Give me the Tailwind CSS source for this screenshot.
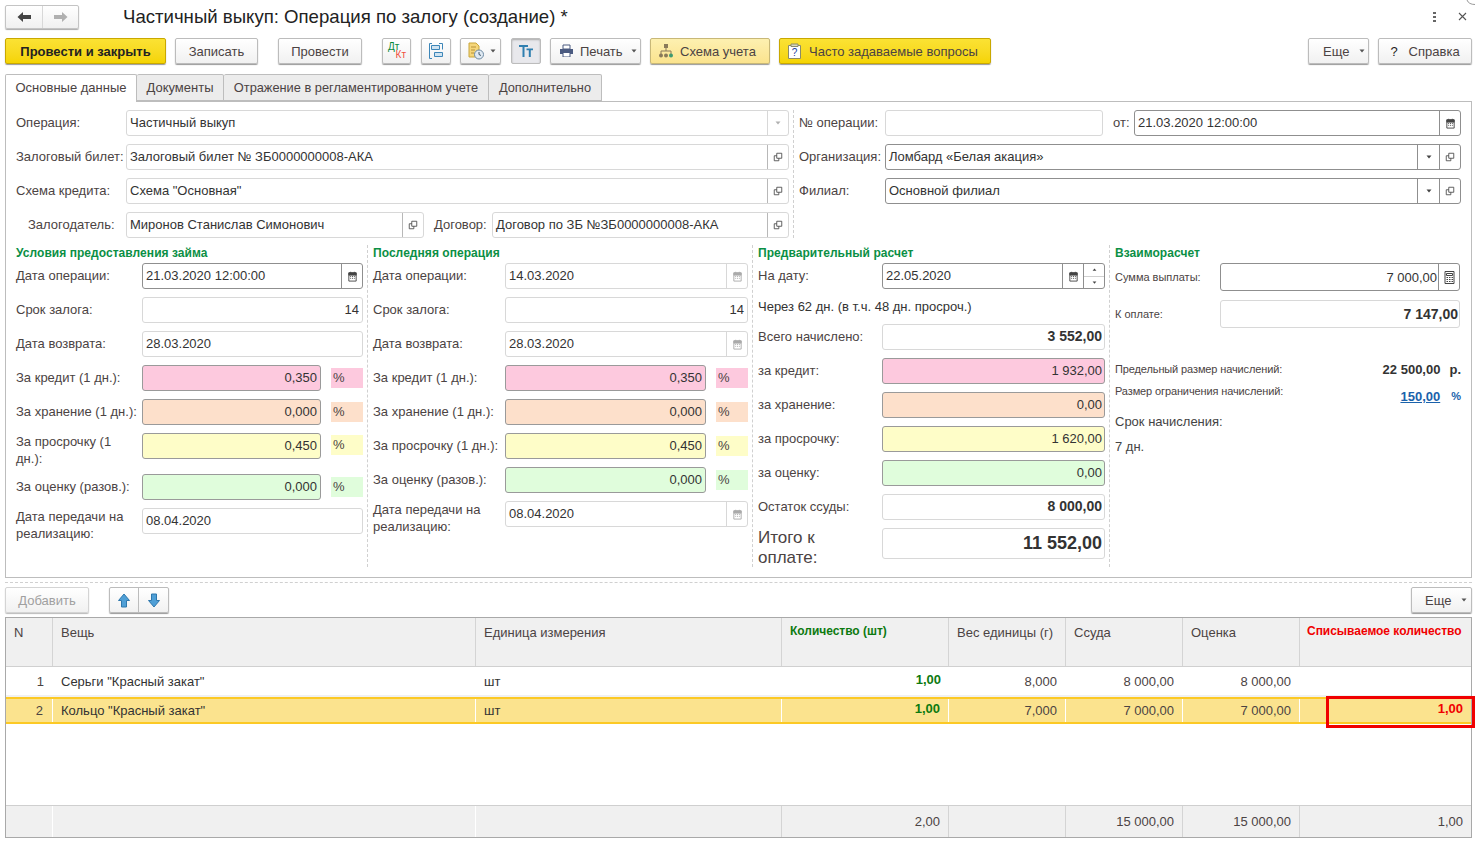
<!DOCTYPE html>
<html lang="ru">
<head>
<meta charset="UTF-8">
<title>Частичный выкуп: Операция по залогу (создание)</title>
<script src="https://cdn.jsdelivr.net/npm/@tailwindcss/browser@4"></script>
</head>
<body class="relative bg-white w-[1475px] h-[844px] overflow-hidden font-['Liberation_Sans',Arial,sans-serif] text-[13px] leading-[17px] text-[#4b4343]">
<svg class="hidden">
  <symbol id="cal" viewBox="0 0 12 12"><path d="M2 2h8v9H2z" fill="none" stroke="currentColor"/><path d="M2 2h8v2.500H2zM4 .8v2M8 .8v2" fill="currentColor" stroke="currentColor" stroke-width=".8"/><path d="M3.500 6h1M5.500 6h1M7.500 6h1M3.500 8h1M5.500 8h1M7.500 8h1" stroke="currentColor"/></symbol>
  <symbol id="copy" viewBox="0 0 12 12"><path d="M4.500 1.500h6v6h-6z" fill="none" stroke="#444"/><path d="M4.500 4.500h-3v6h5.500v-3" fill="none" stroke="#444"/></symbol>
  <symbol id="tri" viewBox="0 0 6 4"><path d="M.5.5h5L3 3.500z" fill="currentColor"/></symbol>
</svg>
<svg class="absolute top-0 right-0" width="9" height="5" viewBox="0 0 9 5"><path d="M1 0c1 3 4 4.500 8 4.500" fill="none" stroke="#999"/></svg>

<div class="pl-[5px] pr-[3px] pt-[5px]">
  <!-- заголовок -->
  <div class="flex items-center h-[33px] pb-[10px]">
    <div class="flex w-[74px] h-[24px] border border-[#c4c4c4] rounded-[2px] shadow-[0_1px_1px_#aaa] bg-linear-to-b from-white to-[#f0f0f0]">
      <div class="w-[37px] flex items-center justify-center border-r border-[#d8d8d8]">
        <svg width="16" height="12" viewBox="0 0 16 12"><path d="M7 1 1.500 6 7 11V8h8V4H7z" fill="#444"/></svg>
      </div>
      <div class="flex-1 flex items-center justify-center">
        <svg width="16" height="12" viewBox="0 0 16 12"><path d="M9 1l5.500 5L9 11V8H1V4h8z" fill="#b0b0b0"/></svg>
      </div>
    </div>
    <div class="ml-[44px] text-[18.6px] leading-[24px] text-[#222]">Частичный выкуп: Операция по залогу (создание) *</div>
    <div class="ml-auto flex items-center text-[#555]">
      <div class="flex flex-col gap-[2px] mr-[22px]"><span class="w-[3px] h-[2px] bg-[#666]"></span><span class="w-[3px] h-[2px] bg-[#666]"></span><span class="w-[3px] h-[2px] bg-[#666]"></span></div>
      <svg class="mr-[5px]" width="9" height="9" viewBox="0 0 9 9"><path d="M1 1l7 7M8 1 1 8" stroke="#555" stroke-width="1.100"/></svg>
    </div>
  </div>

  <!-- панель команд -->
  <div class="flex items-center h-[26px]">
    <button class="w-[161px] h-[26px] rounded-[2px] border border-[#c9a800] bg-linear-to-b from-[#fbe233] to-[#f5d400] shadow-[0_1px_1px_#999] font-bold text-[#222]">Провести и закрыть</button>
    <button class="ml-[9px] w-[83px] h-[26px] rounded-[2px] border border-[#bcbcbc] bg-linear-to-b from-white to-[#f1f1f1] shadow-[0_1px_1px_#999]">Записать</button>
    <button class="ml-[20px] w-[84px] h-[26px] rounded-[2px] border border-[#bcbcbc] bg-linear-to-b from-white to-[#f1f1f1] shadow-[0_1px_1px_#999]">Провести</button>
    <button class="ml-[20px] w-[29px] h-[26px] rounded-[2px] border border-[#bcbcbc] bg-linear-to-b from-white to-[#f1f1f1] shadow-[0_1px_1px_#999] text-[10px] leading-[8px]">
      <span class="block text-left pl-[5px] text-[#0a8a3c]">Дт</span><span class="block text-right pr-[4px] text-[#f05040]">Кт</span>
    </button>
    <button class="ml-[10px] w-[30px] h-[26px] rounded-[2px] border border-[#bcbcbc] bg-linear-to-b from-white to-[#f1f1f1] shadow-[0_1px_1px_#999] flex items-center justify-center">
      <svg width="16" height="18" viewBox="0 0 16 18" fill="none" stroke="#3d86b8"><path d="M4 1.500H1.500v15H4M11 1.500h3.500v6"/><path d="M3.500 3.500h8v4h-8zM6.500 10.500h8v4h-8z" fill="#cfe3f1"/></svg>
    </button>
    <button class="ml-[9px] w-[41px] h-[26px] rounded-[2px] border border-[#bcbcbc] bg-linear-to-b from-white to-[#f1f1f1] shadow-[0_1px_1px_#999] flex items-center pl-[6px]">
      <svg width="18" height="18" viewBox="0 0 18 18"><path d="M2 1h7l3 3v11H2z" fill="#f5d67a" stroke="#c9a63c"/><path d="M4 5h5M4 8h4M4 11h3" stroke="#b8923a"/><circle cx="12" cy="12.500" r="4.500" fill="#dfe9f2" stroke="#6d8aa3"/><path d="M12 10v2.500l2 1" stroke="#44596b" fill="none"/></svg>
      <svg class="ml-[5px] text-[#555]" width="6" height="4"><use href="#tri"/></svg>
    </button>
    <button class="ml-[10px] w-[30px] h-[26px] rounded-[2px] border border-[#bcbcbc] bg-[#e8e8ec] shadow-[inset_0_1px_2px_#aaa] flex items-center justify-center">
      <svg width="16" height="14" viewBox="0 0 16 14" fill="#2f7fb0"><path d="M1 1h9v2H6.500v10h-2V3H1z"/><path d="M8.500 4.500H15v1.800h-2.200V13h-2V6.300H8.500z"/></svg>
    </button>
    <button class="ml-[9px] w-[91px] h-[26px] rounded-[2px] border border-[#bcbcbc] bg-linear-to-b from-white to-[#f1f1f1] shadow-[0_1px_1px_#999] flex items-center pl-[8px]">
      <svg width="15" height="14" viewBox="0 0 15 14"><path d="M4 1h7v4H4z" fill="#fff" stroke="#4a5a80"/><path d="M1 5h13v5h-2.500v3h-8v-3H1z" fill="#4a5a80"/><path d="M4.500 9h6v3.500h-6z" fill="#fff"/></svg>
      <span class="ml-[6px]">Печать</span>
      <svg class="ml-[8px] text-[#555]" width="6" height="4"><use href="#tri"/></svg>
    </button>
    <button class="ml-[9px] w-[120px] h-[26px] rounded-[2px] border border-[#c8b878] bg-linear-to-b from-[#fdf0b0] to-[#fbe38e] shadow-[0_1px_1px_#999] flex items-center pl-[7px]">
      <svg width="17" height="16" viewBox="0 0 17 16" fill="#8a7a5a"><path d="M6 1h4v4H6z"/><path d="M8 5v3M3 11V8h10v3" stroke="#8a7a5a" fill="none"/><circle cx="3" cy="12.500" r="2"/><circle cx="8" cy="12.500" r="2"/><circle cx="13" cy="12.500" r="2" fill="#3f9a70"/></svg>
      <span class="ml-[5px]">Схема учета</span>
    </button>
    <button class="ml-[9px] w-[212px] h-[26px] rounded-[2px] border border-[#c9a800] bg-linear-to-b from-[#fbe233] to-[#f5d400] shadow-[0_1px_1px_#999] flex items-center pl-[7px]">
      <svg width="15" height="17" viewBox="0 0 15 17"><path d="M1.500 2.500h12v13h-12z" fill="#fff" stroke="#8b8b6a"/><path d="M4 1h7v2.500H4z" fill="#d8d8c0" stroke="#8b8b6a"/><text x="7.500" y="13" text-anchor="middle" font-size="10" fill="#2040a0" font-family="Liberation Sans">?</text></svg>
      <span class="ml-[7px] whitespace-nowrap">Часто задаваемые вопросы</span>
    </button>
    <button class="ml-auto w-[61px] h-[26px] rounded-[2px] border border-[#bcbcbc] bg-linear-to-b from-white to-[#f1f1f1] shadow-[0_1px_1px_#999] flex items-center pl-[14px]">
      Еще<svg class="ml-[10px] text-[#555]" width="6" height="4"><use href="#tri"/></svg>
    </button>
    <button class="ml-[9px] w-[94px] h-[26px] rounded-[2px] border border-[#bcbcbc] bg-linear-to-b from-white to-[#f1f1f1] shadow-[0_1px_1px_#999]"><span class="mr-[11px] text-[#222]">?</span>Справка</button>
  </div>

  <!-- вкладки -->
  <div class="flex mt-[10px] h-[27px] relative z-10">
    <div class="w-[132px] h-[28px] pb-[2px] border border-[#bdbdbd] border-b-0 rounded-t-[2px] bg-white flex items-center justify-center">Основные данные</div>
    <div class="w-[87px] pb-[1px] border border-l-0 border-[#bdbdbd] rounded-t-[2px] bg-[#ececec] flex items-center justify-center">Документы</div>
    <div class="w-[265px] pb-[1px] border border-l-0 border-[#bdbdbd] rounded-t-[2px] bg-[#ececec] flex items-center justify-center text-[12.8px]">Отражение в регламентированном учете</div>
    <div class="w-[113px] pb-[1px] border border-l-0 border-[#bdbdbd] rounded-t-[2px] bg-[#ececec] flex items-center justify-center text-[12.8px]">Дополнительно</div>
  </div>

  <!-- основная панель -->
  <div class="w-[1467px] h-[477px] border border-[#bdbdbd] pt-[8px]">
    <div class="flex h-[128px]">
      <div class="w-[788px] border-r border-dashed border-[#d0d0d0] pl-[10px] pr-[3px] flex flex-col gap-[8px]">
        <div class="flex items-center h-[26px]">
          <span class="w-[110px] pb-[2px]">Операция:</span>
          <div class="w-[663px] h-[26px] border border-[#d8d8d8] rounded-[3px] flex items-center pl-[3px] text-[#333]">
            <span class="flex-1 pb-[2px]">Частичный выкуп</span>
            <span class="w-[21px] h-full border-l border-[#d8d8d8] flex items-center justify-center text-[#b0b0b0]"><svg width="6" height="4"><use href="#tri"/></svg></span>
          </div>
        </div>
        <div class="flex items-center h-[26px]">
          <span class="w-[110px] pb-[2px]">Залоговый билет:</span>
          <div class="w-[663px] h-[26px] border border-[#d8d8d8] rounded-[3px] flex items-center pl-[3px] text-[#333]">
            <span class="flex-1 pb-[2px]">Залоговый билет № ЗБ0000000008-АКА</span>
            <span class="w-[21px] h-full border-l border-[#b8b8b8] flex items-center justify-center"><svg width="10" height="10"><use href="#copy"/></svg></span>
          </div>
        </div>
        <div class="flex items-center h-[26px]">
          <span class="w-[110px] pb-[2px]">Схема кредита:</span>
          <div class="w-[663px] h-[26px] border border-[#d8d8d8] rounded-[3px] flex items-center pl-[3px] text-[#333]">
            <span class="flex-1 pb-[2px]">Схема "Основная"</span>
            <span class="w-[21px] h-full border-l border-[#b8b8b8] flex items-center justify-center"><svg width="10" height="10"><use href="#copy"/></svg></span>
          </div>
        </div>
        <div class="flex items-center h-[26px] pl-[12px]">
          <span class="w-[98px] pb-[2px]">Залогодатель:</span>
          <div class="w-[298px] h-[26px] border border-[#d8d8d8] rounded-[3px] flex items-center pl-[3px] text-[#333]">
            <span class="flex-1 pb-[2px]">Миронов Станислав Симонович</span>
            <span class="w-[21px] h-full border-l border-[#b8b8b8] flex items-center justify-center"><svg width="10" height="10"><use href="#copy"/></svg></span>
          </div>
          <span class="ml-[10px] w-[58px] pb-[2px]">Договор:</span>
          <div class="w-[297px] h-[26px] border border-[#d8d8d8] rounded-[3px] flex items-center pl-[3px] text-[#333]">
            <span class="flex-1 pb-[2px] whitespace-nowrap">Договор по ЗБ №ЗБ0000000008-АКА</span>
            <span class="w-[21px] h-full border-l border-[#b8b8b8] flex items-center justify-center"><svg width="10" height="10"><use href="#copy"/></svg></span>
          </div>
        </div>
      </div>
      <div class="flex-1 pl-[5px] flex flex-col gap-[8px]">
        <div class="flex items-center h-[26px]">
          <span class="w-[86px] pb-[2px]">№ операции:</span>
          <div class="w-[218px] h-[26px] border border-[#d8d8d8] rounded-[3px]"></div>
          <span class="ml-[10px] w-[21px] pb-[2px]">от:</span>
          <div class="w-[327px] h-[26px] border border-[#8f8f8f] rounded-[3px] flex items-center pl-[3px] text-[#333]">
            <span class="flex-1 pb-[2px]">21.03.2020 12:00:00</span>
            <span class="w-[21px] h-full border-l border-[#8f8f8f] flex items-center justify-center text-[#444]"><svg width="11" height="11"><use href="#cal"/></svg></span>
          </div>
        </div>
        <div class="flex items-center h-[26px]">
          <span class="w-[86px] pb-[2px]">Организация:</span>
          <div class="w-[576px] h-[26px] border border-[#8f8f8f] rounded-[3px] flex items-center pl-[3px] text-[#333]">
            <span class="flex-1 pb-[2px]">Ломбард «Белая акация»</span>
            <span class="w-[22px] h-full border-l border-[#8f8f8f] flex items-center justify-center text-[#444]"><svg width="6" height="4"><use href="#tri"/></svg></span>
            <span class="w-[21px] h-full border-l border-[#8f8f8f] flex items-center justify-center"><svg width="10" height="10"><use href="#copy"/></svg></span>
          </div>
        </div>
        <div class="flex items-center h-[26px]">
          <span class="w-[86px] pb-[2px]">Филиал:</span>
          <div class="w-[576px] h-[26px] border border-[#8f8f8f] rounded-[3px] flex items-center pl-[3px] text-[#333]">
            <span class="flex-1 pb-[2px]">Основной филиал</span>
            <span class="w-[22px] h-full border-l border-[#8f8f8f] flex items-center justify-center text-[#444]"><svg width="6" height="4"><use href="#tri"/></svg></span>
            <span class="w-[21px] h-full border-l border-[#8f8f8f] flex items-center justify-center"><svg width="10" height="10"><use href="#copy"/></svg></span>
          </div>
        </div>
      </div>
    </div>

    <div class="flex mt-[7px] h-[322px]">
      <!-- условия займа -->
      <div class="w-[362px] border-r border-dashed border-[#d0d0d0] pl-[10px]">
        <div class="h-[18px] font-bold text-[12px] tracking-[0.05px] text-[#0b8f45]">Условия предоставления займа</div>
        <div class="flex flex-col gap-[8px]">
          <div class="flex items-center h-[26px]"><span class="w-[126px] pb-[2px]">Дата операции:</span>
            <div class="w-[221px] h-[26px] border border-[#8f8f8f] rounded-[3px] flex items-center pl-[3px] text-[#333]"><span class="flex-1 pb-[2px]">21.03.2020 12:00:00</span><span class="w-[21px] h-full border-l border-[#8f8f8f] flex items-center justify-center text-[#444]"><svg width="11" height="11"><use href="#cal"/></svg></span></div>
          </div>
          <div class="flex items-center h-[26px]"><span class="w-[126px] pb-[2px]">Срок залога:</span>
            <div class="w-[221px] h-[26px] pb-[2px] border border-[#d8d8d8] rounded-[3px] flex items-center justify-end pr-[3px] text-[#333]">14</div>
          </div>
          <div class="flex items-center h-[26px]"><span class="w-[126px] pb-[2px]">Дата возврата:</span>
            <div class="w-[221px] h-[26px] pb-[2px] border border-[#d8d8d8] rounded-[3px] flex items-center pl-[3px] text-[#333]">28.03.2020</div>
          </div>
          <div class="flex items-center h-[26px]"><span class="w-[126px] pb-[2px]">За кредит (1 дн.):</span>
            <div class="w-[179px] h-[26px] pb-[2px] border border-[#9a9a9a] rounded-[3px] bg-[#fdc9de] flex items-center justify-end pr-[3px] text-[#333]">0,350</div>
            <div class="ml-[10px] w-[32px] h-[20px] pb-[2px] bg-[#fdc9de] pl-[2px] flex items-center">%</div>
          </div>
          <div class="flex items-center h-[26px]"><span class="w-[126px] pb-[2px] whitespace-nowrap">За хранение (1 дн.):</span>
            <div class="w-[179px] h-[26px] pb-[2px] border border-[#9a9a9a] rounded-[3px] bg-[#fde0cb] flex items-center justify-end pr-[3px] text-[#333]">0,000</div>
            <div class="ml-[10px] w-[32px] h-[20px] pb-[2px] bg-[#fde0cb] pl-[2px] flex items-center">%</div>
          </div>
          <div class="flex items-start h-[33px]"><span class="w-[126px] pr-[10px]">За просрочку (1 дн.):</span>
            <div class="w-[179px] h-[26px] pb-[2px] border border-[#9a9a9a] rounded-[3px] bg-[#fefdc8] flex items-center justify-end pr-[3px] text-[#333]">0,450</div>
            <div class="ml-[10px] mt-[2px] w-[32px] h-[20px] pb-[2px] bg-[#fefdc8] pl-[2px] flex items-center">%</div>
          </div>
          <div class="flex items-center h-[26px]"><span class="w-[126px] pb-[2px]">За оценку (разов.):</span>
            <div class="w-[179px] h-[26px] pb-[2px] border border-[#9a9a9a] rounded-[3px] bg-[#e0fddc] flex items-center justify-end pr-[3px] text-[#333]">0,000</div>
            <div class="ml-[10px] w-[32px] h-[20px] pb-[2px] bg-[#e0fddc] pl-[2px] flex items-center">%</div>
          </div>
          <div class="flex items-center h-[26px]"><span class="w-[126px] pr-[10px] pt-[8px]">Дата передачи на реализацию:</span>
            <div class="w-[221px] h-[26px] pb-[2px] border border-[#d8d8d8] rounded-[3px] flex items-center pl-[3px] text-[#333]">08.04.2020</div>
          </div>
        </div>
      </div>

      <!-- последняя операция -->
      <div class="w-[385px] border-r border-dashed border-[#d0d0d0] pl-[5px]">
        <div class="h-[18px] font-bold text-[12px] tracking-[0.05px] text-[#0b8f45]">Последняя операция</div>
        <div class="flex flex-col gap-[8px]">
          <div class="flex items-center h-[26px]"><span class="w-[132px] pb-[2px]">Дата операции:</span>
            <div class="w-[243px] h-[26px] border border-[#d8d8d8] rounded-[3px] flex items-center pl-[3px] text-[#333]"><span class="flex-1 pb-[2px]">14.03.2020</span><span class="w-[21px] h-full border-l border-[#d8d8d8] flex items-center justify-center text-[#aaa]"><svg width="11" height="11"><use href="#cal"/></svg></span></div>
          </div>
          <div class="flex items-center h-[26px]"><span class="w-[132px] pb-[2px]">Срок залога:</span>
            <div class="w-[243px] h-[26px] pb-[2px] border border-[#d8d8d8] rounded-[3px] flex items-center justify-end pr-[3px] text-[#333]">14</div>
          </div>
          <div class="flex items-center h-[26px]"><span class="w-[132px] pb-[2px]">Дата возврата:</span>
            <div class="w-[243px] h-[26px] border border-[#d8d8d8] rounded-[3px] flex items-center pl-[3px] text-[#333]"><span class="flex-1 pb-[2px]">28.03.2020</span><span class="w-[21px] h-full border-l border-[#d8d8d8] flex items-center justify-center text-[#aaa]"><svg width="11" height="11"><use href="#cal"/></svg></span></div>
          </div>
          <div class="flex items-center h-[26px]"><span class="w-[132px] pb-[2px]">За кредит (1 дн.):</span>
            <div class="w-[201px] h-[26px] pb-[2px] border border-[#9a9a9a] rounded-[3px] bg-[#fdc9de] flex items-center justify-end pr-[3px] text-[#333]">0,350</div>
            <div class="ml-[10px] w-[32px] h-[20px] pb-[2px] bg-[#fdc9de] pl-[2px] flex items-center">%</div>
          </div>
          <div class="flex items-center h-[26px]"><span class="w-[132px] pb-[2px] whitespace-nowrap">За хранение (1 дн.):</span>
            <div class="w-[201px] h-[26px] pb-[2px] border border-[#9a9a9a] rounded-[3px] bg-[#fde0cb] flex items-center justify-end pr-[3px] text-[#333]">0,000</div>
            <div class="ml-[10px] w-[32px] h-[20px] pb-[2px] bg-[#fde0cb] pl-[2px] flex items-center">%</div>
          </div>
          <div class="flex items-center h-[26px]"><span class="w-[132px] pb-[2px] whitespace-nowrap">За просрочку (1 дн.):</span>
            <div class="w-[201px] h-[26px] pb-[2px] border border-[#9a9a9a] rounded-[3px] bg-[#fefdc8] flex items-center justify-end pr-[3px] text-[#333]">0,450</div>
            <div class="ml-[10px] w-[32px] h-[20px] pb-[2px] bg-[#fefdc8] pl-[2px] flex items-center">%</div>
          </div>
          <div class="flex items-center h-[26px]"><span class="w-[132px] pb-[2px]">За оценку (разов.):</span>
            <div class="w-[201px] h-[26px] pb-[2px] border border-[#9a9a9a] rounded-[3px] bg-[#e0fddc] flex items-center justify-end pr-[3px] text-[#333]">0,000</div>
            <div class="ml-[10px] w-[32px] h-[20px] pb-[2px] bg-[#e0fddc] pl-[2px] flex items-center">%</div>
          </div>
          <div class="flex items-center h-[26px]"><span class="w-[132px] pr-[10px] pt-[8px]">Дата передачи на реализацию:</span>
            <div class="w-[243px] h-[26px] border border-[#d8d8d8] rounded-[3px] flex items-center pl-[3px] text-[#333]"><span class="flex-1 pb-[2px]">08.04.2020</span><span class="w-[21px] h-full border-l border-[#d8d8d8] flex items-center justify-center text-[#aaa]"><svg width="11" height="11"><use href="#cal"/></svg></span></div>
          </div>
        </div>
      </div>

      <!-- предварительный расчет -->
      <div class="w-[357px] border-r border-dashed border-[#d0d0d0] pl-[5px]">
        <div class="h-[18px] font-bold text-[12px] tracking-[0.05px] text-[#0b8f45]">Предварительный расчет</div>
        <div class="flex flex-col gap-[8px]">
          <div class="flex items-center h-[26px]"><span class="w-[124px] pb-[2px]">На дату:</span>
            <div class="w-[223px] h-[26px] border border-[#8f8f8f] rounded-[3px] flex items-center pl-[3px] text-[#333]">
              <span class="flex-1 pb-[2px]">22.05.2020</span>
              <span class="w-[21px] h-full border-l border-[#8f8f8f] flex items-center justify-center text-[#444]"><svg width="11" height="11"><use href="#cal"/></svg></span>
              <span class="w-[21px] h-full border-l border-[#8f8f8f] flex flex-col">
                <span class="flex-1 flex items-center justify-center"><svg class="rotate-180 text-[#444]" width="5" height="3"><use href="#tri"/></svg></span>
                <span class="flex-1 flex items-center justify-center border-t border-[#d0d0d0]"><svg class="text-[#444]" width="5" height="3"><use href="#tri"/></svg></span>
              </span>
            </div>
          </div>
          <div class="h-[19px] pt-[1px] text-[#333] whitespace-nowrap">Через 62 дн. (в т.ч. 48 дн. просроч.)</div>
          <div class="flex items-center h-[26px]"><span class="w-[124px] pb-[2px]">Всего начислено:</span>
            <div class="w-[223px] h-[26px] pb-[2px] border border-[#d8d8d8] rounded-[3px] flex items-center justify-end pr-[2px] font-bold text-[14px] text-[#333]">3 552,00</div>
          </div>
          <div class="flex items-center h-[26px]"><span class="w-[124px] pb-[2px]">за кредит:</span>
            <div class="w-[223px] h-[26px] pb-[2px] border border-[#9a9a9a] rounded-[3px] bg-[#fdc9de] flex items-center justify-end pr-[2px] text-[#333]">1 932,00</div>
          </div>
          <div class="flex items-center h-[26px]"><span class="w-[124px] pb-[2px]">за хранение:</span>
            <div class="w-[223px] h-[26px] pb-[2px] border border-[#9a9a9a] rounded-[3px] bg-[#fde0cb] flex items-center justify-end pr-[2px] text-[#333]">0,00</div>
          </div>
          <div class="flex items-center h-[26px]"><span class="w-[124px] pb-[2px]">за просрочку:</span>
            <div class="w-[223px] h-[26px] pb-[2px] border border-[#9a9a9a] rounded-[3px] bg-[#fefdc8] flex items-center justify-end pr-[2px] text-[#333]">1 620,00</div>
          </div>
          <div class="flex items-center h-[26px]"><span class="w-[124px] pb-[2px]">за оценку:</span>
            <div class="w-[223px] h-[26px] pb-[2px] border border-[#9a9a9a] rounded-[3px] bg-[#e0fddc] flex items-center justify-end pr-[2px] text-[#333]">0,00</div>
          </div>
          <div class="flex items-center h-[26px]"><span class="w-[124px] pb-[2px]">Остаток ссуды:</span>
            <div class="w-[223px] h-[26px] pb-[2px] border border-[#d8d8d8] rounded-[3px] flex items-center justify-end pr-[2px] font-bold text-[14px] text-[#333]">8 000,00</div>
          </div>
          <div class="flex items-start h-[40px]"><span class="w-[124px] pr-[30px] text-[17px] leading-[20px]">Итого к оплате:</span>
            <div class="w-[223px] h-[31px] border border-[#d8d8d8] rounded-[3px] flex items-center justify-end pr-[2px] font-bold text-[18px] text-[#333]">11 552,00</div>
          </div>
        </div>
      </div>

      <!-- взаиморасчет -->
      <div class="flex-1 pl-[5px]">
        <div class="h-[18px] font-bold text-[12px] tracking-[0.05px] text-[#0b8f45]">Взаиморасчет</div>
        <div class="flex items-center h-[28px] text-[11px]"><span class="w-[105px]">Сумма выплаты:</span>
          <div class="w-[240px] h-[28px] border border-[#8f8f8f] rounded-[3px] flex items-center justify-end text-[13px] text-[#333]">
            <span class="pr-[1px]">7 000,00</span>
            <span class="w-[21px] h-full border-l border-[#8f8f8f] flex items-center justify-center">
              <svg width="11" height="13" viewBox="0 0 11 13" fill="none" stroke="#444"><path d="M1 .5h9v12H1zM2.500 2.500h6v2h-6z"/><path d="M2.500 6.500h1.500M5 6.500h1.500M7.500 6.500H9M2.500 8.500h1.500M5 8.500h1.500M7.500 8.500H9M2.500 10.500h1.500M5 10.500h1.500M7.500 10.500H9"/></svg>
            </span>
          </div>
        </div>
        <div class="flex items-center h-[28px] mt-[9px] text-[11px]"><span class="w-[105px]">К оплате:</span>
          <div class="w-[240px] h-[28px] border border-[#d8d8d8] rounded-[3px] flex items-center justify-end pr-[1px] font-bold text-[14px] text-[#333]">7 147,00</div>
        </div>
        <div class="flex items-center h-[17px] mt-[33px] w-[346px] text-[11px] tracking-[-0.12px]">
          <span class="flex-1">Предельный размер начислений:</span>
          <span class="font-bold text-[13px] tracking-normal text-[#333]">22 500,00</span>
          <span class="ml-[9px] font-bold text-[13px] tracking-normal text-[#333]">р.</span>
        </div>
        <div class="flex items-start h-[22px] mt-[5px] w-[346px] text-[11px] tracking-[-0.12px]">
          <span class="flex-1">Размер ограничения начислений:</span>
          <span class="mt-[5px] font-bold text-[13px] tracking-normal text-[#1a62ab] underline">150,00</span>
          <span class="ml-[11px] mt-[5px] font-bold text-[11px] tracking-normal text-[#1a62ab]">%</span>
        </div>
        <div class="mt-[8px] text-[#444]">Срок начисления:</div>
        <div class="mt-[8px] text-[#444]">7 дн.</div>
      </div>
    </div>
  </div>

  <div class="mt-[4px] w-[1467px] border-t border-dashed border-[#d0d0d0]"></div>

  <!-- команды таблицы -->
  <div class="flex items-center h-[26px] mt-[4px] w-[1467px]">
    <button class="w-[84px] h-[26px] rounded-[2px] border border-[#d4d4d4] bg-linear-to-b from-white to-[#f1f1f1] shadow-[0_1px_1px_#bbb] text-[#a0a0a0]">Добавить</button>
    <div class="ml-[20px] flex w-[60px] h-[26px] rounded-[2px] border border-[#bcbcbc] bg-linear-to-b from-white to-[#f1f1f1] shadow-[0_1px_1px_#999]">
      <span class="w-[29px] border-r border-[#bcbcbc] flex items-center justify-center">
        <svg width="12" height="15" viewBox="0 0 12 15"><path d="M6 1l5.500 6.500H8.500V14h-5V7.500H.5z" fill="#4f9fd6" stroke="#2f78ad"/></svg>
      </span>
      <span class="flex-1 flex items-center justify-center">
        <svg width="12" height="15" viewBox="0 0 12 15"><path d="M6 14 .5 7.500h3V1h5v6.500h3z" fill="#4f9fd6" stroke="#2f78ad"/></svg>
      </span>
    </div>
    <button class="ml-auto w-[61px] h-[26px] rounded-[2px] border border-[#bcbcbc] bg-linear-to-b from-white to-[#f1f1f1] shadow-[0_1px_1px_#999] flex items-center pl-[13px]">
      Еще<svg class="ml-[10px] text-[#555]" width="6" height="4"><use href="#tri"/></svg>
    </button>
  </div>

  <!-- таблица -->
  <div class="mt-[4px] w-[1467px] h-[221px] border border-[#a9a9a9] flex flex-col">
    <div class="grid grid-cols-[47px_423px_306px_167px_117px_117px_117px_1fr] h-[49px] bg-[#f0f0f0] border-b border-[#d0d0d0] shrink-0">
      <div class="border-r border-[#d4d4d4] pl-[8px] pt-[6px]">N</div>
      <div class="border-r border-[#d4d4d4] pl-[8px] pt-[6px]">Вещь</div>
      <div class="border-r border-[#d4d4d4] pl-[8px] pt-[6px]">Единица измерения</div>
      <div class="border-r border-[#d4d4d4] pl-[8px] pt-[5px] font-bold text-[12px] tracking-[-0.03px] text-[#0d7a10]">Количество (шт)</div>
      <div class="border-r border-[#d4d4d4] pl-[8px] pt-[6px] whitespace-nowrap">Вес единицы (г)</div>
      <div class="border-r border-[#d4d4d4] pl-[8px] pt-[6px]">Ссуда</div>
      <div class="border-r border-[#d4d4d4] pl-[8px] pt-[6px]">Оценка</div>
      <div class="pl-[7px] pt-[5px] font-bold text-[12px] tracking-[-0.03px] text-[#f00000] whitespace-nowrap">Списываемое количество</div>
    </div>
    <div class="grid grid-cols-[47px_423px_306px_167px_117px_117px_117px_1fr] h-[30px] items-center border-b-2 border-[#f1f1f1] shrink-0">
      <div class="text-right pr-[9px]">1</div>
      <div class="pl-[8px] text-[#333]">Серьги "Красный закат"</div>
      <div class="pl-[8px] text-[#333]">шт</div>
      <div class="text-right pr-[8px] pb-[4px] font-bold text-[#0d7a10]">1,00</div>
      <div class="text-right pr-[9px]">8,000</div>
      <div class="text-right pr-[9px]">8 000,00</div>
      <div class="text-right pr-[9px]">8 000,00</div>
      <div></div>
    </div>
    <div class="relative h-[27px] grid grid-cols-[47px_423px_306px_167px_117px_117px_117px_1fr] items-stretch bg-[#fbe38e] border-y-2 border-[#fcc925] shrink-0">
      <div class="border-r border-white flex items-center justify-end pr-[9px]">2</div>
      <div class="border-r border-white flex items-center pl-[8px] text-[#333]">Кольцо "Красный закат"</div>
      <div class="border-r border-white flex items-center pl-[8px] text-[#333]">шт</div>
      <div class="border-r border-white flex items-center justify-end pr-[8px] pb-[4px] font-bold text-[#0d7a10]">1,00</div>
      <div class="border-r border-white flex items-center justify-end pr-[8px]">7,000</div>
      <div class="border-r border-white flex items-center justify-end pr-[8px]">7 000,00</div>
      <div class="border-r border-white flex items-center justify-end pr-[8px]">7 000,00</div>
      <div class="flex items-center justify-end pr-[8px] pb-[4px] font-bold text-[#f00000]">1,00</div>
      <div class="absolute left-[1320px] top-[-3px] w-[149px] h-[32px] border-[3px] border-[#f00000]"></div>
    </div>
    <div class="flex-1"></div>
    <div class="grid grid-cols-[47px_423px_306px_167px_117px_117px_117px_1fr] h-[32px] bg-[#f0f0f0] border-t border-[#cfcfcf] items-stretch shrink-0">
      <div class="border-r border-white"></div>
      <div class="border-r border-white"></div>
      <div class="border-r border-[#d4d4d4]"></div>
      <div class="border-r border-[#d4d4d4] flex items-center justify-end pr-[8px]">2,00</div>
      <div class="border-r border-[#d4d4d4]"></div>
      <div class="border-r border-[#d4d4d4] flex items-center justify-end pr-[8px]">15 000,00</div>
      <div class="border-r border-[#d4d4d4] flex items-center justify-end pr-[8px]">15 000,00</div>
      <div class="flex items-center justify-end pr-[8px]">1,00</div>
    </div>
  </div>
</div>
</body>
</html>
